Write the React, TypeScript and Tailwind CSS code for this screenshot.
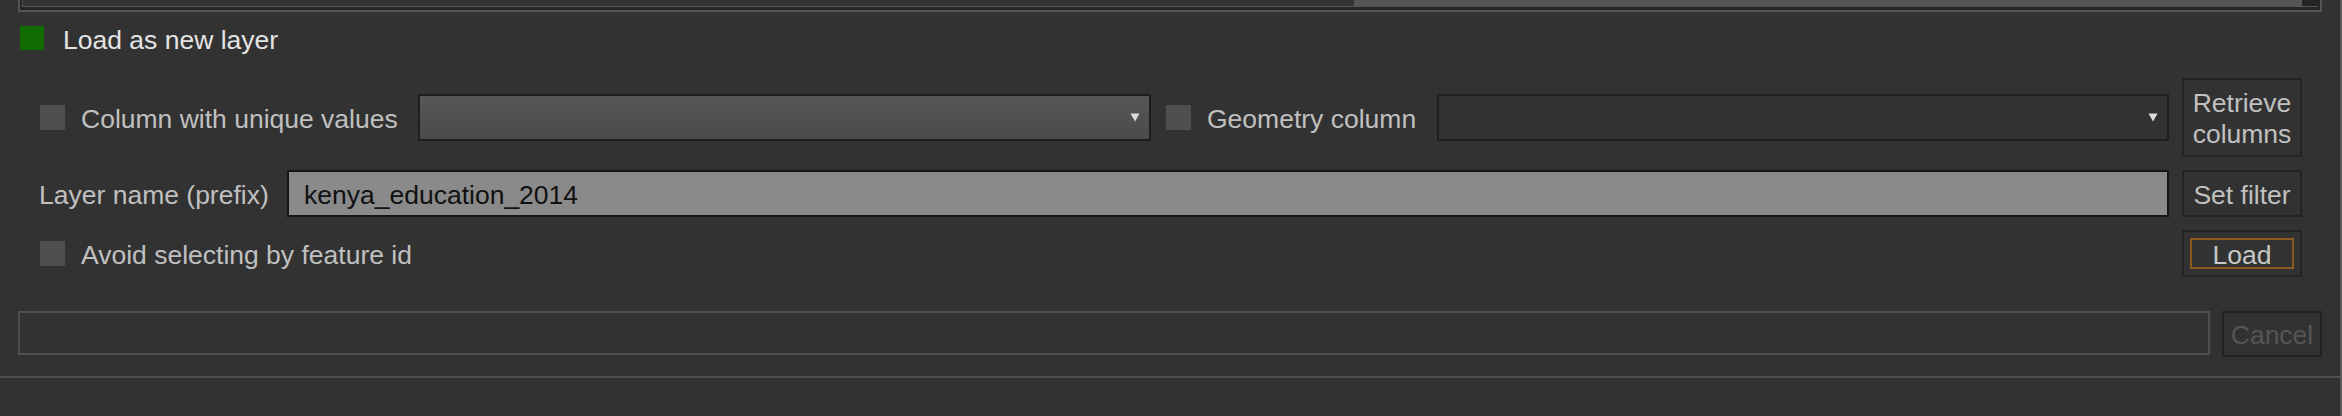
import React from "react";

function Arrow() {
  return (
    <svg width="10" height="9" viewBox="0 0 10 9" className="shrink-0">
      <path d="M0.5 0.5 L9.5 0.5 L5 8.5 Z" fill="#dcdcdc" />
    </svg>
  );
}

function Check() {
  return <div className="w-[25px] h-[25px] bg-[#4f4f4f] shrink-0" />;
}

export default function App() {
  return (
    <div className="w-[2342px] h-[416px] bg-[#323232] overflow-hidden border-r-2 border-[#585858] font-['Liberation_Sans',Arial,sans-serif] text-[26.5px] leading-none text-[#c0c0c0]">
      {/* top frame with scrollbar */}
      <div className="ml-[18px] w-[2304px] h-[12px] border-x-2 border-b-2 border-[#555555] bg-[#262626]">
        <div className="ml-[2px] w-[2296px] h-[7px] border-l border-b border-[#555555] flex">
          <div className="flex-1 bg-[#333333]" />
          <div className="w-[948px] bg-[#555555]" />
          <div className="w-[16px] bg-[#242424]" />
        </div>
      </div>

      {/* Load as new layer */}
      <div className="mt-[14px] ml-[20px] h-[24px] flex items-center gap-[19px]">
        <div className="w-[24px] h-[24px] bg-[#106c00]" />
        <span className="pt-[4px] text-[#e4e4e4]">Load as new layer</span>
      </div>

      {/* Row 1 */}
      <div className="mt-[28px] h-[79px] pl-[40px] flex items-center">
        <div className="w-[378px] flex items-center gap-[16px]">
          <Check />
          <span className="pt-[3px]">Column with unique values</span>
        </div>
        <div className="w-[733px] h-[47px] border-2 border-[#1e1e1e] bg-gradient-to-b from-[#575757] to-[#4b4b4b] flex items-center justify-end pr-[9px]">
          <Arrow />
        </div>
        <div className="ml-[15px]">
          <Check />
        </div>
        <span className="ml-[16px] w-[230px] pt-[3px]">Geometry column</span>
        <div className="w-[732px] h-[47px] border-2 border-[#1f1f1f] bg-[#323232] flex items-center justify-end pr-[9px]">
          <Arrow />
        </div>
        <div className="ml-[13px] w-[120px] h-[79px] border-2 border-[#232323] bg-[#323232] flex flex-col items-center justify-center pt-[2px] leading-[31px] text-center">
          <span>Retrieve</span>
          <span>columns</span>
        </div>
      </div>

      {/* Row 2 */}
      <div className="mt-[13px] h-[47px] pl-[39px] flex items-center">
        <span className="w-[248px] pt-[3px]">Layer name (prefix)</span>
        <div className="w-[1882px] h-[47px] border-2 border-[#141414] bg-[#8a8a8a] flex items-center pl-[15px] pt-[3px] text-[#111111]">
          kenya_education_2014
        </div>
        <div className="ml-[13px] w-[120px] h-[47px] border-2 border-[#232323] bg-[#323232] flex items-center justify-center pt-[3px]">
          Set filter
        </div>
      </div>

      {/* Row 3 */}
      <div className="mt-[13px] h-[47px] pl-[40px] w-[2302px] flex items-center justify-between">
        <div className="flex items-center gap-[16px]">
          <Check />
          <span className="pt-[3px]">Avoid selecting by feature id</span>
        </div>
        <div className="w-[120px] h-[47px] border-2 border-[#232323] bg-[#323232] p-[6px]">
          <div className="w-full h-full border-2 border-[#8a5a1f] flex items-center justify-center pt-[3px] text-[#c8c8c8]">
            Load
          </div>
        </div>
      </div>

      {/* Progress row */}
      <div className="mt-[34px] h-[46px] pl-[18px] flex items-start">
        <div className="w-[2192px] h-[44px] border-2 border-[#4f4f4f] bg-[#323232]" />
        <div className="ml-[12px] w-[100px] h-[46px] border-2 border-[#222222] bg-[#323232] flex items-center justify-center pt-[3px] text-[#555555]">
          Cancel
        </div>
      </div>

      {/* separator */}
      <div className="mt-[19px] h-[2px] bg-[#4f4f4f]" />
    </div>
  );
}
